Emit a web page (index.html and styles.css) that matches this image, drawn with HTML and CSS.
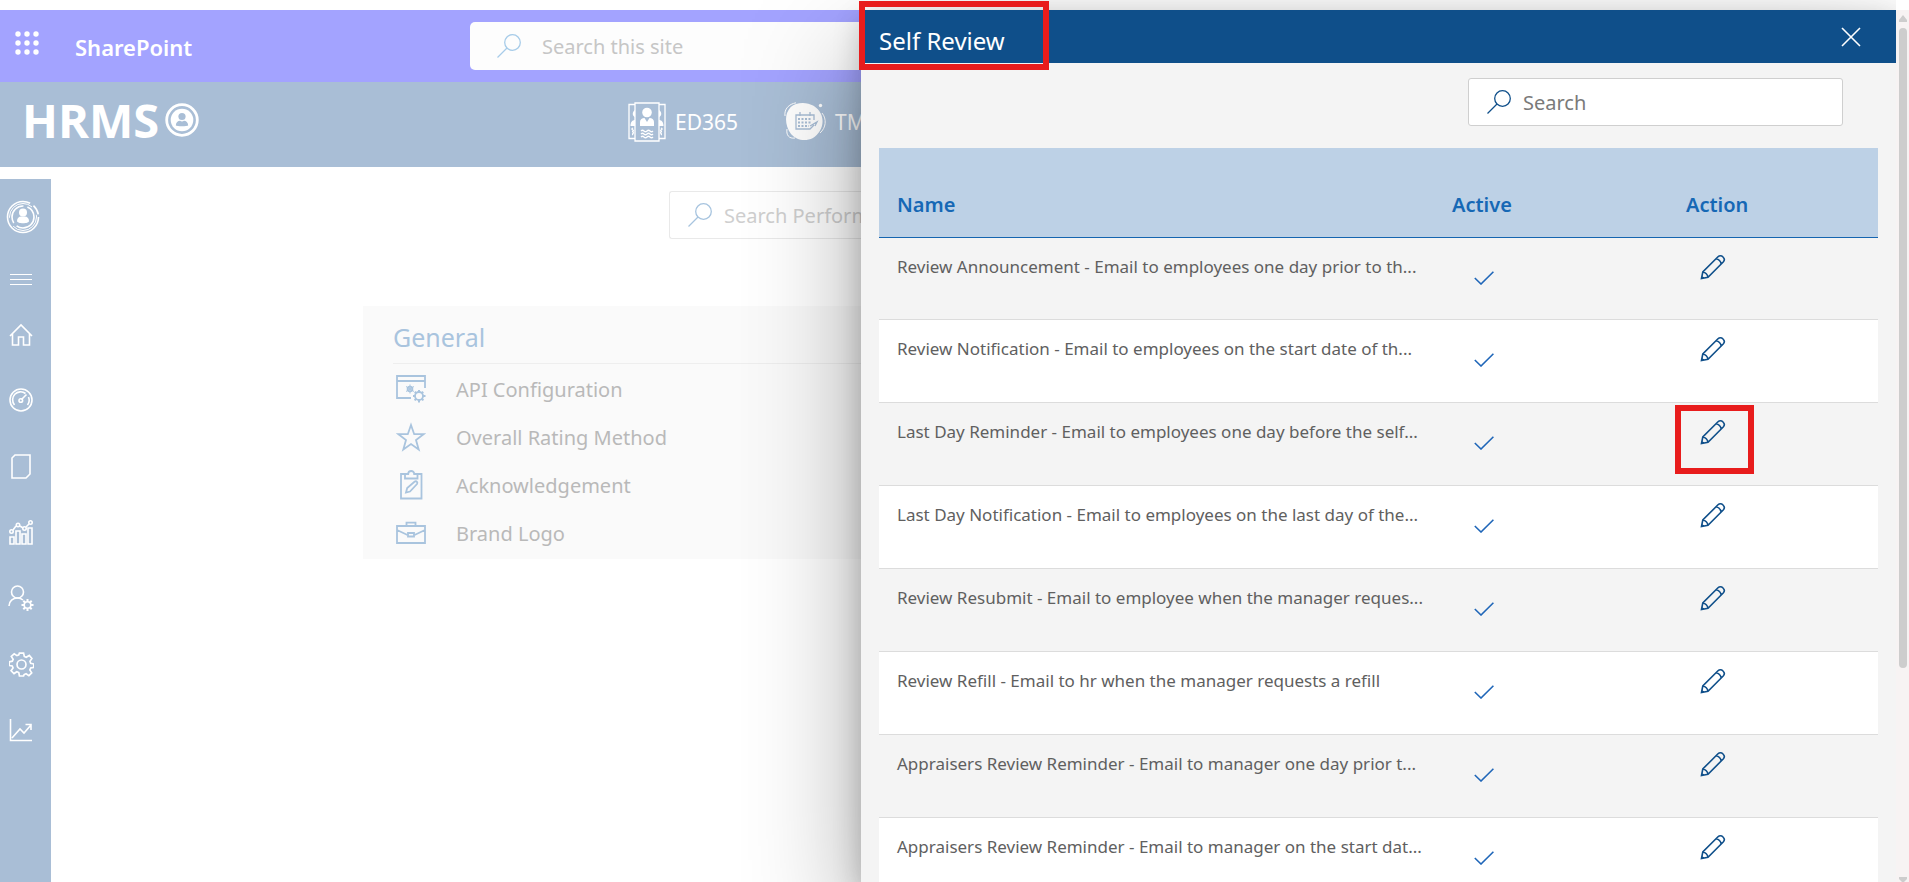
FILE: index.html
```html
<!DOCTYPE html>
<html lang="en">
<head>
<meta charset="utf-8">
<title>HRMS - Self Review</title>
<link rel="stylesheet" href="styles.css">
</head>
<body>
<svg class="defs" aria-hidden="true">
  <symbol id="i-search" viewBox="0 0 24 24"><circle cx="15.5" cy="8.5" r="7.8"/><path d="M10 14 .5 23.5"/></symbol>
  <symbol id="i-check" viewBox="0 0 20 14"><path d="M.8 7 7 13 19.4.8"/></symbol>
  <symbol id="i-pencil" viewBox="0 0 26 26"><path d="M1.500 24.500l1.300-6.500L18 2.800c1.400-1.400 3.500-1.400 4.800 0l.4.400c1.300 1.300 1.300 3.400 0 4.800L8 23.200zM2.800 18c2.500.5 4.700 2.700 5.200 5.200M16 4.800c2.500.5 4.700 2.700 5.200 5.200M1.800 22.500l1.700 1.700"/></symbol>
  <symbol id="i-gear" viewBox="0 0 24 24"><path d="M10 1h4l.7 3.300 1.800.8 3-1.800 2.500 3-1.900 2.700.7 1.900 3 .6v3.300l-3 .6-.8 1.900 1.800 2.700-2.700 2.700-2.700-1.800-1.900.8L14 23h-4l-.6-3.300-1.900-.8-2.700 1.800L2 18l1.900-2.700-.8-1.900L.2 13v-3.500l3-.7.8-1.800L2.200 4.200 5 1.800l2.600 1.700 1.800-.8z"/><circle cx="12" cy="12" r="4.300"/></symbol>
</svg>
<div class="app">
  <div class="site">
    <header class="suite">
      <button class="icon-button waffle" aria-label="App launcher">
        <svg width="24" height="24" viewBox="0 0 24 24"><g fill="#fff"><circle cx="3" cy="3" r="2.700"/><circle cx="12" cy="3" r="2.700"/><circle cx="21" cy="3" r="2.700"/><circle cx="3" cy="12" r="2.700"/><circle cx="12" cy="12" r="2.700"/><circle cx="21" cy="12" r="2.700"/><circle cx="3" cy="21" r="2.700"/><circle cx="12" cy="21" r="2.700"/><circle cx="21" cy="21" r="2.700"/></g></svg>
      </button>
      <a class="suite-name" href="#">SharePoint</a>
      <label class="site-search"><svg class="line-icon" width="24" height="24"><use href="#i-search"/></svg><input type="text" placeholder="Search this site" aria-label="Search this site"></label>
    </header>
    <div class="brandbar">
      <a class="brand" href="#">HRMS
        <svg width="34" height="34" viewBox="0 0 34 34"><circle cx="17" cy="17" r="15.300" fill="none" stroke="#fff" stroke-width="2.800"/><circle cx="17" cy="17" r="11.300" fill="#fff"/><g fill="#a9bed6"><circle cx="17" cy="13.500" r="3.600"/><path d="M10.800 22.500c0-3 2.200-4.700 4.200-4.700 1.200 1 2.800 1 4 0 2 0 4.200 1.700 4.200 4.700-1 1-11.400 1-12.400 0z"/></g></svg>
      </a>
      <nav class="modules">
        <a href="#">
          <svg width="38" height="40" viewBox="0 0 38 40"><g fill="none" stroke="#fff" stroke-width="1.300"><path d="M7 1h24v38H7zM7 2.500H1v34h6M31 2.500h6v34h-6M5 26c-1.500 1-1.500 1 0 2s-1.500 1 0 2-1.500 2 0 3M33 26c1.500 1 1.500 1 0 2s1.500 1 0 2 1.500 2 0 3"/><path d="M13 29c1-1 2-1 3 0s2 1 3 0 2-1 3 0 2 1 3 0M13 32c1-1 2-1 3 0s2 1 3 0 2-1 3 0 2 1 3 0M13 35c1-1 2-1 3 0s2 1 3 0 2-1 3 0 2 1 3 0"/></g><g fill="#fff"><circle cx="19" cy="10.500" r="4.800"/><path d="M12 24v-4c0-2.500 2-4 4.500-4l2.500 4 2.500-4c2.500 0 4.500 1.500 4.500 4v4zM7 8c-3 2-3 6 0 7zM31 8c3 2 3 6 0 7zM2.500 24c0-4 2-6 4.500-6v6zM35.500 24c0-4-2-6-4.500-6v6z"/></g></svg>
          ED365</a>
        <a href="#">
          <svg width="42" height="40" viewBox="0 0 42 40"><path d="M12 2C22-1 33 3 37 12c4 9 0 19-8 24-8 4-17 2-22-4C2 25 1 17 3 11 5 6 8 3 12 2z" fill="#fff"/><circle cx="36.500" cy="3.500" r="1.700" fill="#fff"/><g fill="none" stroke="#a9bed6" stroke-width="1.300"><path d="M30 18v-5H12v14h14l4-4M16 10v4M26 10v4M26 24l7-4-2 4"/><path d="M14 17h14M14 20.500h14M14 24h11" stroke-dasharray="2 1.500" stroke-width="2"/></g><path d="M1 14C0 7 5 2 12 .8M3 27c-1 6 2 10 8 9M38 11c5 6 4 15-2 20" fill="none" stroke="#fff"/></svg>
          TM365</a>
      </nav>
    </div>
    <div class="workspace">
      <nav class="rail">
        <a href="#" aria-label="Profile"><svg width="34" height="34" viewBox="0 0 34 34"><circle cx="17" cy="17" r="15.500" stroke-dasharray="80 4 10 4"/><circle cx="17" cy="17" r="13.500" stroke-dasharray="32 9" stroke-width="1"/><circle cx="17" cy="17" r="11" stroke-dasharray="24 4"/><g fill="#fff" stroke="none"><circle cx="17" cy="12.500" r="4"/><path d="M11 21c0-3 2-4.500 4-4.500h4c2 0 4 1.500 4 4.500 0 3-12 3-12 0z"/></g></svg></a>
        <a href="#" aria-label="Menu"><svg width="24" height="24" viewBox="0 0 24 24"><path d="M1 6.500h22M1 11.500h22M1 16.500h22" stroke-width="1"/></svg></a>
        <a href="#" aria-label="Home"><svg width="24" height="24" viewBox="0 0 24 24"><path d="M1 13 12 2l11 11M3.500 11v11h6v-8h5v8h6V11"/></svg></a>
        <a href="#" aria-label="Dashboard"><svg width="24" height="24" viewBox="0 0 24 24"><circle cx="12" cy="12" r="11"/><path d="M16.500 5.500A8 8 0 0 0 5.500 17M19.500 9a8 8 0 0 1-1 8M12.500 11.500l5-5"/><circle cx="11.800" cy="12.500" r="1.800"/></svg></a>
        <a href="#" aria-label="Documents"><svg width="24" height="26" viewBox="0 0 24 26"><path d="M6 2h15v19l-4 4H3V5z"/></svg></a>
        <a href="#" aria-label="Reports"><svg width="24" height="26" viewBox="0 0 24 26"><path d="M1 18h4v7H1zM7 12h4v13H7zM13 15h4v10h-4zM19 9h4v16h-4zM4 11l3-4M11 7l3 2M17 8l3-3"/><circle cx="2.500" cy="12.500" r="1.700"/><circle cx="9" cy="6" r="1.700"/><circle cx="15.500" cy="9.500" r="1.700"/><circle cx="21.500" cy="3.500" r="1.700"/></svg></a>
        <a href="#" aria-label="User settings"><svg width="26" height="26" viewBox="0 0 26 26"><circle cx="9.500" cy="7" r="6"/><path d="M1 21c0-5 4-8 8.500-8 2 0 4 .7 5.500 2"/><circle cx="19.500" cy="20" r="3.300"/><path d="M19.500 14v2.500M19.500 23.500V26M13.500 20H16M23 20h2.500M15.300 15.800 17 17.500M22 22.500l1.700 1.700M23.700 15.800 22 17.500M17 22.500l-1.700 1.700" stroke-width="2"/></svg></a>
        <a href="#" aria-label="Settings"><svg width="25" height="25"><use href="#i-gear"/></svg></a>
        <a href="#" aria-label="Trends"><svg width="24" height="24" viewBox="0 0 24 24"><path d="M1.500 1v21.500H23M3 20l8-9 4 4 7-8M16.500 6.500H22V12"/></svg></a>
      </nav>
      <main class="content">
        <label class="perf-search"><svg class="line-icon" width="24" height="24"><use href="#i-search"/></svg><input type="text" placeholder="Search Performance" aria-label="Search Performance"></label>
        <section class="general">
          <h2>General</h2>
          <ul>
            <li><a href="#"><svg width="30" height="28" viewBox="0 0 30 28"><path d="M15 23H1V1h28v12M1 6h28"/><circle cx="14" cy="14" r="2.400"/><path d="M14 9.500v9M10 11.500l8 5M18 11.500l-8 5" stroke-width="1"/><circle cx="23" cy="21" r="4"/><path d="M23 15v2M23 25v2.500M17 21h2M27 21h2.500M18.800 16.800l1.400 1.400M25.800 23.800l1.600 1.600M27.200 16.800l-1.400 1.400M20.200 23.800l-1.600 1.600" stroke-width="2"/></svg>API Configuration</a></li>
            <li><a href="#"><svg width="30" height="30" viewBox="0 0 30 30"><path d="M15 3l3.200 9.200H27.500L20 18l2.700 9.500L15 22l-7.700 5.500L10 18l-7.500-5.800h9.300z"/></svg>Overall Rating Method</a></li>
            <li><a href="#"><svg width="30" height="30" viewBox="0 0 30 30"><path d="M10 4H5v24.500h20.500V4h-5M9 4v4.500h12.500V4h-3.300c0-4-6-4-6 0zM10 22.500l1.200-4.500 7.500-6.500c2-.8 3.300 1 2.300 2.500l-7 7.500z"/></svg>Acknowledgement</a></li>
            <li><a href="#"><svg width="30" height="24" viewBox="0 0 30 24"><path d="M1 5h28v17H1zM10.500 5V1.700h9V5M1 9l11 5.200M29 9l-11 5.200M12 12h6v3.500h-6z"/></svg>Brand Logo</a></li>
          </ul>
        </section>
      </main>
    </div>
  </div>

  <aside class="panel" aria-label="Self Review">
    <header class="panel-head">
      <h1 class="marked">Self Review</h1>
      <button class="icon-button" aria-label="Close"><svg class="close" width="20" height="20" viewBox="0 0 20 20"><path d="M1 1l18 18M19 1 1 19"/></svg></button>
    </header>
    <div class="panel-body">
      <label class="panel-search"><svg class="line-icon" width="24" height="24"><use href="#i-search"/></svg><input type="text" placeholder="Search" aria-label="Search"></label>
      <table class="emails">
        <colgroup><col class="c-name"><col class="c-active"><col class="c-action"></colgroup>
        <thead><tr><th scope="col">Name</th><th scope="col">Active</th><th scope="col">Action</th></tr></thead>
        <tbody>
          <tr><td>Review Announcement - Email to employees one day prior to th...</td><td><svg class="check"><use href="#i-check"/></svg></td><td><button class="icon-button edit" aria-label="Edit"><svg><use href="#i-pencil"/></svg></button></td></tr>
          <tr><td>Review Notification - Email to employees on the start date of th...</td><td><svg class="check"><use href="#i-check"/></svg></td><td><button class="icon-button edit" aria-label="Edit"><svg><use href="#i-pencil"/></svg></button></td></tr>
          <tr><td>Last Day Reminder - Email to employees one day before the self...</td><td><svg class="check"><use href="#i-check"/></svg></td><td><button class="icon-button edit marked" aria-label="Edit"><svg><use href="#i-pencil"/></svg></button></td></tr>
          <tr><td>Last Day Notification - Email to employees on the last day of the...</td><td><svg class="check"><use href="#i-check"/></svg></td><td><button class="icon-button edit" aria-label="Edit"><svg><use href="#i-pencil"/></svg></button></td></tr>
          <tr><td>Review Resubmit - Email to employee when the manager reques...</td><td><svg class="check"><use href="#i-check"/></svg></td><td><button class="icon-button edit" aria-label="Edit"><svg><use href="#i-pencil"/></svg></button></td></tr>
          <tr><td>Review Refill - Email to hr when the manager requests a refill</td><td><svg class="check"><use href="#i-check"/></svg></td><td><button class="icon-button edit" aria-label="Edit"><svg><use href="#i-pencil"/></svg></button></td></tr>
          <tr><td>Appraisers Review Reminder - Email to manager one day prior t...</td><td><svg class="check"><use href="#i-check"/></svg></td><td><button class="icon-button edit" aria-label="Edit"><svg><use href="#i-pencil"/></svg></button></td></tr>
          <tr><td>Appraisers Review Reminder - Email to manager on the start dat...</td><td><svg class="check"><use href="#i-check"/></svg></td><td><button class="icon-button edit" aria-label="Edit"><svg><use href="#i-pencil"/></svg></button></td></tr>
        </tbody>
      </table>
    </div>
  </aside>
  <div class="scrollbar" aria-hidden="true">
    <svg width="8" height="7" viewBox="0 0 8 7"><path d="M4 0l4 5v2H0V5z" fill="#cdcdcd"/></svg>
    <div class="thumb"></div>
    <svg class="down" width="8" height="5" viewBox="0 0 8 5"><path d="M0 0h8v2L5 5H3L0 2z" fill="#cdcdcd"/></svg>
  </div>
</div>
</body>
</html>
```

FILE: styles.css
```css
* { box-sizing: border-box; }
body {
  margin: 0;
  background: #fff;
  font-family: "Noto Sans", "Open Sans", sans-serif;
  font-size: 17px;
  color: #606060;
}
a { color: inherit; text-decoration: none; }
svg { flex: none; }
.defs { position: absolute; width: 0; height: 0; }

.app {
  display: flex;
  height: 100vh;
  padding-top: 10px;
  overflow: hidden;
}
.site {
  flex: 1;
  min-width: 0;
  display: flex;
  flex-direction: column;
}
.icon-button {
  display: flex;
  padding: 0;
  border: 0;
  background: none;
}
input {
  flex: 1;
  min-width: 0;
  padding: 0;
  border: 0;
  outline: 0;
  background: none;
  font: inherit;
  font-size: 20px;
  color: #333;
}
input::placeholder { color: #7a7a7a; opacity: 1; }
.line-icon { fill: none; stroke: #0f4f8a; stroke-width: 1.3; }

.suite {
  display: flex;
  align-items: center;
  height: 72px;
  padding-left: 15px;
  background: #a3a3ff;
}
.waffle { padding-bottom: 6px; }
.suite-name {
  width: 395px;
  margin-left: 36px;
  padding-top: 2px;
  font-size: 22px;
  font-weight: 600;
  color: #fff;
}
.site-search {
  flex: 1;
  display: flex;
  align-items: center;
  gap: 21px;
  height: 48px;
  padding-left: 27px;
  border-radius: 5px 0 0 5px;
  background: #fdfdfd;
}
.site-search .line-icon { stroke: #a7cce9; }
.site-search input::placeholder { color: #c6c6c6; }

.brandbar {
  display: flex;
  align-items: center;
  justify-content: space-between;
  height: 85px;
  padding-left: 22px;
  background: #a9bed6;
  color: #fff;
}
.brand {
  display: flex;
  align-items: center;
  gap: 6px;
  padding-bottom: 9px;
  font-family: "Open Sans", sans-serif;
  font-size: 47px;
  font-weight: 700;
}
.modules { display: flex; gap: 46px; width: 233px; padding-bottom: 6px; }
.modules a {
  display: flex;
  align-items: center;
  gap: 9px;
  font-size: 21px;
  line-height: 40px;
  white-space: nowrap;
}

.workspace { flex: 1; display: flex; min-height: 0; }
.rail {
  display: flex;
  flex-direction: column;
  width: 51px;
  margin-top: 12px;
  padding-top: 5px;
  background: #a9bed6;
}
.rail a {
  display: flex;
  align-items: center;
  justify-content: center;
  width: 42px;
  height: 66px;
}
.rail a:first-child { width: 45px; }
.rail a:nth-child(2) { height: 60px; }
.rail a:nth-child(3) { height: 57px; padding-bottom: 8px; }
.rail svg { fill: none; stroke: #fff; stroke-width: 1.6; }

.content {
  flex: 1;
  min-width: 0;
  display: flex;
  flex-direction: column;
  padding-top: 24px;
}
.perf-search {
  align-self: flex-end;
  display: flex;
  align-items: center;
  gap: 12px;
  width: 192px;
  height: 48px;
  padding-left: 18px;
  border: 1px solid #e9e9e9;
  border-right: 0;
  border-radius: 3px 0 0 3px;
}
.perf-search .line-icon { stroke: #a7c4df; }
.perf-search input::placeholder { color: #cfcfcf; }
.general {
  margin: 67px 0 0 312px;
  min-height: 253px;
  padding: 12px 0 0 30px;
  background: #fafafa;
}
.general h2 {
  margin: 0;
  padding-bottom: 6px;
  border-bottom: 1px solid #eee;
  font-size: 25px;
  line-height: 39px;
  font-weight: 400;
  color: #a9c4de;
}
.general ul { margin: 0; padding: 1px 0 0 3px; list-style: none; }
.general a {
  display: flex;
  align-items: center;
  gap: 30px;
  height: 48px;
  font-size: 20px;
  color: #b9b9b9;
}
.general svg { fill: none; stroke: #a9c4de; stroke-width: 1.8; }

.panel {
  width: 1035px;
  flex: none;
  background: #f4f4f4;
  box-shadow: 0 48px 108px rgba(0, 0, 0, .34), 0 9px 27px rgba(0, 0, 0, .2);
  clip-path: inset(-10px 0 0 -120px);
}
.panel-head {
  display: flex;
  justify-content: space-between;
  align-items: center;
  height: 53px;
  padding: 0 35px 0 18px;
  background: #0f4f8a;
}
.panel-head h1 {
  margin: 0;
  padding-top: 8px;
  font-size: 24px;
  line-height: 53px;
  font-weight: 400;
  color: #fff;
}
.close { fill: none; stroke: #fff; stroke-width: 1.6; }
.marked { position: relative; }
.marked::after {
  content: "";
  position: absolute;
  border: 6px solid #e81c1c;
}
h1.marked::after { inset: -5px -44px -3px -20px; }
.edit.marked::after { inset: -14px -28px -29px -25px; }

.panel-body {
  display: flex;
  flex-direction: column;
  padding: 15px 18px 0;
}
.panel-search {
  align-self: flex-end;
  display: flex;
  align-items: center;
  gap: 12px;
  width: 375px;
  height: 48px;
  margin: 0 35px 22px 0;
  padding: 0 18px;
  border: 1px solid #cfcfcf;
  border-radius: 3px;
  background: #fff;
}
.emails {
  width: 100%;
  border-collapse: separate;
  border-spacing: 0;
  table-layout: fixed;
}
.c-name { width: 555px; }
.c-active { width: 234px; }
.emails th {
  height: 90px;
  padding: 24px 18px 0;
  border-bottom: 1px solid #1565b0;
  background: #bdd1e6;
  font-size: 20px;
  font-weight: 600;
  text-align: left;
  color: #1668b5;
}
.emails td {
  height: 83px;
  padding: 15px 18px 0;
  border-bottom: 1px solid #dcdcdc;
  line-height: 28px;
  vertical-align: top;
  white-space: nowrap;
}
.emails tbody tr:first-child td { height: 82px; }
.emails tbody tr:nth-child(even) td { background: #fff; }
.check {
  display: block;
  width: 20px;
  height: 14px;
  margin: 18px 0 0 22px;
  fill: none;
  stroke: #1f66b8;
  stroke-width: 1.6;
}
.edit { margin: 1px 0 0 14px; }
.edit svg {
  width: 26px;
  height: 26px;
  fill: none;
  stroke: #0f4f8a;
  stroke-width: 1.6;
}

.scrollbar {
  display: flex;
  flex-direction: column;
  align-items: center;
  gap: 6px;
  width: 13px;
  flex: none;
  padding-top: 5px;
  background: #f7f3f3;
}
.thumb { width: 8px; height: 640px; border-radius: 4px; background: #cdcdcd; }
.down { margin-top: auto; }
```
